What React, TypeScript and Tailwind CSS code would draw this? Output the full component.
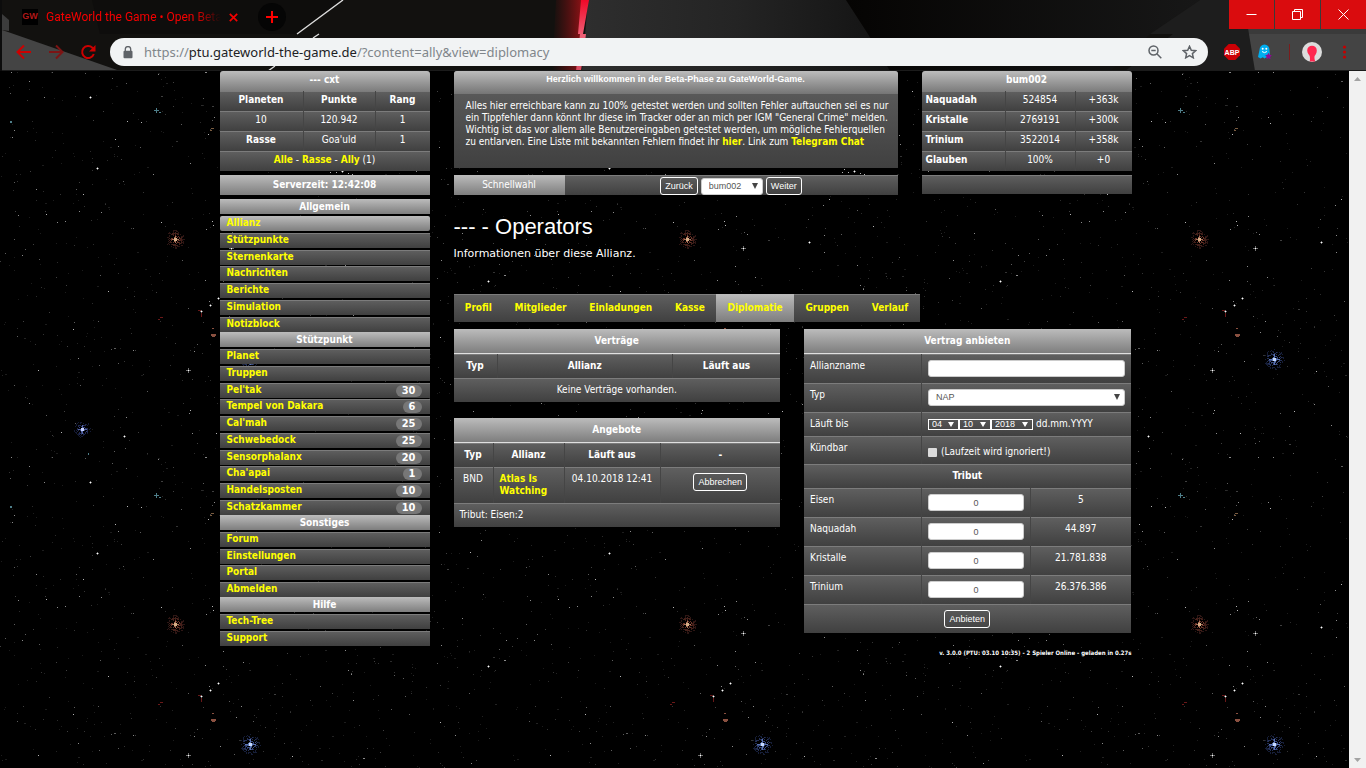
import type { ReactNode } from "react";

const LIGHT = "bg-linear-to-b from-[#bcbcbc] to-[#7e7e7e]";
const DARK = "shadow-[inset_0_1px_0_#7c7c7c] bg-linear-to-b from-[#606060] to-[#404040]";
const LINK = "font-bold text-[#ffff00]";
const UI = "font-['Liberation_Sans',Arial,sans-serif]";
const SEP = "border-l border-l-[#454545]";

/* ---------- star background ---------- */

type Dot = { x: number; y: number; s: number; c: string };

function makeDots(count: number): Dot[] {
  let seed = 4711;
  const next = () => {
    seed = (seed * 1103515245 + 12345) % 2147483648;
    return seed / 2147483648;
  };
  const shades = ["#1c1c1c", "#222222", "#2b2b2b", "#333333", "#3f3f3f", "#5c5c5c", "#8a8a8a"];
  const dots: Dot[] = [];
  for (let i = 0; i < count; i++) {
    const x = Math.floor(next() * 511);
    const y = Math.floor(next() * 384);
    const k = next();
    dots.push({ x, y, s: next() > 0.95 ? 2 : 1, c: shades[Math.floor(k * k * shades.length)] });
  }
  return dots;
}

const DOTS = makeDots(900);

function makeHalo(cx: number, cy: number, radius: number, count: number, shades: string[]): Dot[] {
  let seed = cx * 31 + cy;
  const next = () => {
    seed = (seed * 1103515245 + 12345) % 2147483648;
    return seed / 2147483648;
  };
  const dots: Dot[] = [];
  for (let i = 0; i < count; i++) {
    const a = next() * Math.PI * 2;
    const d = Math.sqrt(next()) * radius;
    dots.push({
      x: Math.round(cx + Math.cos(a) * d),
      y: Math.round(cy + Math.sin(a) * d),
      s: 1,
      c: shades[Math.min(shades.length - 1, Math.floor((d / radius) * shades.length))],
    });
  }
  return dots;
}

const HALOS = [
  ...makeHalo(175, 168, 9, 150, ["#9a5a48", "#6a3428", "#44201a", "#2e1614"]),
  ...makeHalo(82, 358, 8, 110, ["#5a6cae", "#34407a", "#202850", "#141a34"]),
  ...makeHalo(250, 288, 10, 160, ["#5f78b4", "#384a80", "#243058", "#161e38"]),
];

const SPARKS: [number, number, number][] = [
  [97, 97, 2], [83, 123, 1], [161, 151, 1], [218, 227, 2], [210, 234, 2], [201, 240, 2],
  [188, 299, 3], [108, 220, 1], [190, 339, 1], [124, 365, 2], [90, 26, 2], [127, 50, 1],
  [141, 51, 1], [115, 68, 1], [208, 63, 1], [10, 51, 1], [216, 362, 1], [231, 177, 3],
  [297, 171, 2], [212, 150, 1], [213, 154, 1], [317, 128, 1], [361, 155, 1],
  [73, 258, 1], [38, 299, 1], [46, 143, 1], [61, 361, 1], [332, 98, 1], [336, 101, 1],
  [342, 100, 2], [348, 102, 1], [352, 103, 1], [330, 101, 1], [246, 52, 1], [292, 300, 1],
  [372, 318, 2], [440, 266, 1], [470, 96, 1], [488, 210, 2], [270, 340, 1], [400, 20, 1],
];

function Space() {
  return (
    <svg className="absolute inset-0 h-full w-full" aria-hidden="true" shapeRendering="crispEdges">
      <defs>
        <pattern id="stars" width="512" height="385" patternUnits="userSpaceOnUse">
          {DOTS.map((d, i) => (
            <rect key={i} x={d.x} y={d.y} width={d.s} height={1} fill={d.c} />
          ))}
          {HALOS.map((d, i) => (
            <rect key={i} x={d.x} y={d.y} width={1} height={1} fill={d.c} />
          ))}
          {SPARKS.map(([x, y, r], i) => (
            <g key={i}>
              {r > 1 && (
                <path d={`M${x - r + 1} ${y}h${r * 2 - 1}v1h${-(r * 2 - 1)}zM${x} ${y - r + 1}h1v${r * 2 - 1}h-1z`} fill="#707070" />
              )}
              <rect x={x} y={y} width="1" height="1" fill={r > 1 ? "#ffffff" : "#b4b4b4"} />
            </g>
          ))}
          <path d="M172 168h7v1h-7zM175 165h1v7h-1z" fill="#a87058" />
          <path d="M174 167h3v3h-3z" fill="#d8b088" />
          <path d="M78 358h9v1h-9zM82 354h1v9h-1z" fill="#5666a8" />
          <path d="M81 357h3v3h-3z" fill="#c8d4ff" />
          <path d="M245 288h11v1h-11zM250 283h1v11h-1z" fill="#5a74b4" />
          <path d="M249 287h3v3h-3z" fill="#c8dcff" />
          <path d="M198 239h3v1h-3zM201 242h1v4h-1zM158 248h2v1h-2zM160 246h3v1h-3z" fill="#6a1818" />
          <path d="M211 263h5v2h-5zM212 265h3v1h-3zM212 257h2v1h-2z" fill="#8a5040" />
          <path d="M154 39h5v1h-5zM156 37h1v5h-1zM159 41h2v1h-2zM88 382h1v2h-1zM10 50h2v2h-2z" fill="#4f7f8a" />
          <path d="M211 57h3v1h-3zM210 59h2v1h-2z" fill="#7a5c40" />
        </pattern>
      </defs>
      <rect width="100%" height="100%" fill="#000" />
      <rect width="100%" height="100%" fill="url(#stars)" />
    </svg>
  );
}

/* ---------- browser frame ---------- */

function FrameArt() {
  return (
    <svg className="absolute inset-0 h-full w-full" viewBox="0 0 1366 71" preserveAspectRatio="none" aria-hidden="true">
      <defs>
        <linearGradient id="mid" x1="0" x2="1">
          <stop offset="0" stopColor="#2e2e2e" />
          <stop offset="0.5" stopColor="#242424" />
          <stop offset="1" stopColor="#131313" />
        </linearGradient>
        <linearGradient id="glow" x1="0" x2="1">
          <stop offset="0" stopColor="#6a1010" stopOpacity="0" />
          <stop offset="1" stopColor="#8c1216" />
        </linearGradient>
        <linearGradient id="beam" x1="0" y1="0" x2="0" y2="1">
          <stop offset="0" stopColor="#f00828" />
          <stop offset="0.5" stopColor="#ee6076" />
          <stop offset="1" stopColor="#d84a60" />
        </linearGradient>
        <linearGradient id="right" x1="0" x2="1">
          <stop offset="0" stopColor="#050403" />
          <stop offset="1" stopColor="#171717" />
        </linearGradient>
      </defs>
      <rect width="1366" height="71" fill="#12110f" />
      <path d="M92 0H343L297 34H100Z" fill="#0e0d0c" />
      <path d="M2 14L9 20V31L2 30Z" fill="#3c3c3c" />
      <path d="M2 30L8 32L120 71H2Z" fill="#444444" />
      <path d="M343 0L297 34M319 34L313 38M275 66L268 71" stroke="#dcdcdc" strokeWidth="1.4" />
      <path d="M556 0H582L578 71H552Z" fill="url(#glow)" />
      <path d="M588 0H846L868 34L890 71H582Z" fill="url(#mid)" />
      <path d="M581 0H589L583 34H578ZM580 34H586L581 71H576Z" fill="url(#beam)" />
      <path d="M846 0H1200L1150 34L1110 71H890L868 34Z" fill="url(#right)" />
      <path d="M1200 0H1366V71H1125L1173 34H1150Z" fill="#1d1d1d" />
      <path d="M1243 0H1366V34H1249Z" fill="#3a3a3a" />
      <path d="M1249 34H1366V71H1255Z" fill="#444444" />
      <rect y="70" width="1366" height="1" fill="#1b1b1b" />
      <rect width="2" height="71" fill="#0c0c0c" />
    </svg>
  );
}

function WindowButton({ label, children }: { label: string; children: ReactNode }) {
  return (
    <button type="button" aria-label={label} className="flex h-[29px] w-[45px] items-center justify-center bg-[#da0c0e]">
      <svg width="11" height="11" viewBox="0 0 11 11" fill="none" stroke="#fff" strokeWidth="1">
        {children}
      </svg>
    </button>
  );
}

function BrowserFrame() {
  return (
    <header className="relative h-[71px] shrink-0">
      <FrameArt />
      <div className="relative flex h-[34px] items-start">
        <div className="ml-[22px] flex h-[34px] w-[218px] items-center text-[#f40000]">
          <span className={`flex h-4 w-4 items-center justify-center bg-black text-[9px] font-bold text-[#b01818] ${UI}`}>GW</span>
          <span className="ml-2 w-[175px] overflow-hidden mask-r-from-85% font-[Roboto,sans-serif] text-[12px] whitespace-nowrap">
            GateWorld the Game • Open Beta
          </span>
          <button type="button" aria-label="Tab schließen" className="ml-2">
            <svg width="9" height="9" viewBox="0 0 9 9" stroke="#f40000" strokeWidth="1.7"><path d="M.8.8l7.4 7.4M8.2.8L.8 8.2" /></svg>
          </button>
        </div>
        <button type="button" aria-label="Neuer Tab" className="mt-[3px] ml-[18px] flex h-7 w-7 items-center justify-center rounded-full bg-[#050505]">
          <svg width="12" height="12" viewBox="0 0 12 12" stroke="#ff0000" strokeWidth="2"><path d="M6 0v12M0 6h12" /></svg>
        </button>
        <div className="ml-auto flex gap-px">
          <WindowButton label="Minimieren"><path d="M.5 5.5h10" /></WindowButton>
          <WindowButton label="Verkleinern"><path d="M.5 2.5h8v8h-8zM2.5 2.5v-2h8v8h-2" /></WindowButton>
          <WindowButton label="Schließen"><path d="M.5.5l10 10M10.5.5l-10 10" /></WindowButton>
        </div>
      </div>
      <div className="relative flex h-9 items-center pr-[19px] pl-4">
        <button type="button" aria-label="Zurück">
          <svg width="16" height="16" viewBox="0 0 16 16" fill="none" stroke="#cc0000" strokeWidth="2"><path d="M15 8H2.5M8 1.5L1.5 8 8 14.500" /></svg>
        </button>
        <button type="button" aria-label="Vorwärts" className="ml-4">
          <svg width="16" height="16" viewBox="0 0 16 16" fill="none" stroke="#7c1414" strokeWidth="2"><path d="M1 8h12.500M8 1.5L14.500 8 8 14.500" /></svg>
        </button>
        <button type="button" aria-label="Neu laden" className="ml-4">
          <svg width="16" height="16" viewBox="0 0 16 16" fill="none" stroke="#cc0000" strokeWidth="2"><path d="M13.800 10A6 6 0 1 1 12.400 3.800L14 5.500" /><path d="M15.500 1v6.500H9z" fill="#cc0000" stroke="none" /></svg>
        </button>
        <div className="ml-[14px] flex h-7 flex-1 items-center rounded-full bg-[#f1f3f4] pr-[11px] pl-[13px]">
          <svg width="10" height="13" viewBox="0 0 10 13"><path d="M2.300 5V3.300a2.700 2.700 0 0 1 5.400 0V5" fill="none" stroke="#5f6368" strokeWidth="1.300" /><rect x="0.500" y="4.800" width="9" height="7.400" rx="1" fill="#5f6368" /></svg>
          <div className="ml-[11px] flex-1 font-['Noto_Sans',sans-serif] text-[13px] leading-5 text-[#80868b]">
            https://<span className="text-[#202124]">ptu.gateworld-the-game.de</span>/?content=ally&amp;view=diplomacy
          </div>
          <svg width="14" height="14" viewBox="0 0 14 14" fill="none" stroke="#5f6368" strokeWidth="1.500"><circle cx="5.500" cy="5.500" r="4.500" /><path d="M3.300 5.500h4.400M8.800 8.800l4.500 4.500" /></svg>
          <svg className="ml-5" width="15" height="14" viewBox="0 0 15 14" fill="none" stroke="#5f6368" strokeWidth="1.500"><path d="M7.500 1.300l1.800 3.900 4.300.5-3.200 2.900.9 4.200-3.800-2.200-3.800 2.200.9-4.200-3.200-2.900 4.300-.5z" /></svg>
        </div>
        <svg className="ml-4" width="16" height="16" viewBox="0 0 16 16"><path d="M4.700 0h6.600L16 4.700v6.600L11.300 16H4.700L0 11.300V4.700z" fill="#cc0005" /><text x="8" y="10.800" textAnchor="middle" fontSize="7" fontWeight="bold" fill="#fff" fontFamily="Liberation Sans, sans-serif">ABP</text></svg>
        <svg className="ml-[18px]" width="14" height="16" viewBox="0 0 14 16"><path d="M1.500 6a5 5.500 0 0 1 10 0l.5 7-2 1.200-1.700-1-1.800 1.300-1.700-1.300L2.500 14.500 0 13z" fill="#00aef0" /><circle cx="4.700" cy="4.800" r="1" fill="#fff" /><circle cx="8.300" cy="4.800" r="1" fill="#fff" /><path d="M4 7.500q2.500 2.300 5 0" stroke="#fff" fill="none" /><path d="M10.500 8.800l1 2 2.400.4-1.700 1.700.4 2.400-2.100-1.100-2.100 1.100.4-2.400-1.700-1.700 2.400-.4z" fill="#8d0a94" /></svg>
        <div className="ml-[17px] h-4 w-px bg-[#7c1c1c]" />
        <svg className="ml-3" width="20" height="20" viewBox="0 0 20 20"><circle cx="10" cy="10" r="10" fill="#dcdcdc" /><path d="M5.200 8.500a4.800 4.800 0 0 1 9.600 0c0 3-1.600 4.500-2.200 5.500-.3.800-.2 3.500.6 5.400H7.800c.3-1.500.2-3.500 0-5-.3-1.400-2.600-2.700-2.600-5.900z" fill="#ff2850" /></svg>
        <button type="button" aria-label="Menü" className="ml-5">
          <svg width="5" height="14" viewBox="0 0 5 14" fill="#c40000"><circle cx="2.500" cy="2" r="1.600" /><circle cx="2.500" cy="7" r="1.600" /><circle cx="2.500" cy="12" r="1.600" /></svg>
        </button>
      </div>
    </header>
  );
}

function ScrollRail() {
  return (
    <div className="relative flex w-[17px] shrink-0 flex-col items-center justify-between bg-[#f1f1f1] py-[6px]" aria-hidden="true">
      <svg width="7" height="4" viewBox="0 0 7 4" fill="#a3a3a3"><path d="M3.500 0L7 4H0z" /></svg>
      <svg width="7" height="4" viewBox="0 0 7 4" fill="#a3a3a3"><path d="M0 0h7L3.500 4z" /></svg>
    </div>
  );
}

/* ---------- shared controls ---------- */

function OutlineButton({ children }: { children: ReactNode }) {
  return (
    <button type="button" className={`h-[18px] rounded-[3px] border border-white px-1 text-[9px] leading-4 text-white ${UI}`}>
      {children}
    </button>
  );
}

function Picker({ label, options, className, id }: { label?: string; options: string[]; className: string; id?: string }) {
  return (
    <span className={`relative inline-block text-[#555] ${className}`}>
      <select id={id} aria-label={label} className={`block h-[17px] w-full appearance-none rounded-[3px] border border-[#ccc] bg-white pl-[7px] text-[9px] leading-[15px] ${UI}`}>
        {options.map((o) => <option key={o}>{o}</option>)}
      </select>
      <svg className="pointer-events-none absolute top-[5px] right-[5px]" width="6" height="6" viewBox="0 0 6 6" fill="#444"><path d="M0 0h6L3 6z" /></svg>
    </span>
  );
}

function DatePicker({ label, value, className }: { label: string; value: string; className: string }) {
  return (
    <span className={`relative inline-block ${className}`}>
      <select aria-label={label} className={`block h-[11px] w-full appearance-none border border-white bg-transparent pl-[3px] text-[9px] leading-[9px] text-white ${UI}`}>
        <option>{value}</option>
      </select>
      <svg className="pointer-events-none absolute top-[3px] right-[5px]" width="6" height="5" viewBox="0 0 6 5" fill="#fff"><path d="M0 0h6L3 5z" /></svg>
    </span>
  );
}

/* ---------- sidebar ---------- */

type Entry = { name: string; count?: number; active?: boolean };

const MENU: { title: string; height: string; entries: Entry[] }[] = [
  {
    title: "Allgemein",
    height: "h-[116px]",
    entries: [
      { name: "Allianz", active: true }, { name: "Stützpunkte" }, { name: "Sternenkarte" }, { name: "Nachrichten" },
      { name: "Berichte" }, { name: "Simulation" }, { name: "Notizblock" },
    ],
  },
  {
    title: "Stützpunkt",
    height: "h-[166px]",
    entries: [
      { name: "Planet" }, { name: "Truppen" }, { name: "Pel'tak", count: 30 }, { name: "Tempel von Dakara", count: 6 },
      { name: "Cal'mah", count: 25 }, { name: "Schwebedock", count: 25 }, { name: "Sensorphalanx", count: 20 },
      { name: "Cha'apai", count: 1 }, { name: "Handelsposten", count: 10 }, { name: "Schatzkammer", count: 10 },
    ],
  },
  {
    title: "Sonstiges",
    height: "h-[65px]",
    entries: [{ name: "Forum" }, { name: "Einstellungen" }, { name: "Portal" }, { name: "Abmelden" }],
  },
  { title: "Hilfe", height: "h-[32px]", entries: [{ name: "Tech-Tree" }, { name: "Support" }] },
];

const COMPACT = "w-full table-fixed border-separate border-spacing-0 text-center leading-[18px] [&_td]:pb-[2px] [&_th]:pb-[2px]";

function Sidebar() {
  return (
    <aside className="w-[210px] shrink-0">
      <table className={COMPACT}>
        <colgroup><col className="w-[83px]" /><col className="w-[72px]" /><col /></colgroup>
        <thead>
          <tr><th colSpan={3} className={`rounded-t-[3px] ${LIGHT}`}>--- cxt</th></tr>
          <tr><th className={DARK}>Planeten</th><th className={`${DARK} ${SEP}`}>Punkte</th><th className={`${DARK} ${SEP}`}>Rang</th></tr>
        </thead>
        <tbody>
          <tr><td className={DARK}>10</td><td className={`${DARK} ${SEP}`}>120.942</td><td className={`${DARK} ${SEP}`}>1</td></tr>
          <tr><th className={DARK}>Rasse</th><td className={`${DARK} ${SEP}`}>Goa'uld</td><td className={`${DARK} ${SEP}`}>1</td></tr>
          <tr>
            <td colSpan={3} className={DARK}>
              <a href="#alle" className={LINK}>Alle</a> - <a href="#rasse" className={LINK}>Rasse</a> - <a href="#ally" className={LINK}>Ally</a> (1)
            </td>
          </tr>
        </tbody>
      </table>
      <div className={`my-1 text-center leading-5 font-bold ${LIGHT}`}>Serverzeit: 12:42:08</div>
      <nav>
        {MENU.map((g) => (
          <section key={g.title}>
            <h2 className={`mb-[2px] text-center leading-[15px] font-bold ${LIGHT}`}>{g.title}</h2>
            <ul className={`flex flex-col justify-between ${g.height}`}>
              {g.entries.map((e) => (
                <li key={e.name} className={`flex h-[15px] items-start justify-between pr-2 pl-[7px] ${e.active ? `rounded-[2px] ${LIGHT}` : DARK}`}>
                  <a href="#menu" className={`leading-[14px] ${LINK}`}>{e.name}</a>
                  {e.count !== undefined && (
                    <span className="mt-[2px] rounded-full bg-[#777] px-[6px] text-[11px] leading-3 font-bold">{e.count}</span>
                  )}
                </li>
              ))}
            </ul>
          </section>
        ))}
      </nav>
    </aside>
  );
}

/* ---------- main column ---------- */

const RESOURCES = [
  ["Naquadah", "524854", "+363k"],
  ["Kristalle", "2769191", "+300k"],
  ["Trinium", "3522014", "+358k"],
  ["Glauben", "100%", "+0"],
];

const TABS = ["Profil", "Mitglieder", "Einladungen", "Kasse", "Diplomatie", "Gruppen", "Verlauf"];

const TRIBUTE = [
  ["Eisen", "5"],
  ["Naquadah", "44.897"],
  ["Kristalle", "21.781.838"],
  ["Trinium", "26.376.386"],
];

function TopRow() {
  return (
    <div className="flex gap-6">
      <div className="min-w-0 flex-1">
        <div className="h-[97px] rounded-t-[3px] bg-linear-to-b from-[#606060] to-[#404040]">
          <h1 className={`h-[23px] rounded-t-[3px] bg-linear-to-b from-[#bcbcbc] to-[#757575] text-center text-[9px] leading-4 font-bold ${UI}`}>
            Herzlich willkommen in der Beta-Phase zu GateWorld-Game.
          </h1>
          <p className="pt-[6px] pr-1 pl-3 leading-3">
            Alles hier erreichbare kann zu 100% getestet werden und sollten Fehler auftauchen sei es nur
            <br />
            ein Tippfehler dann könnt Ihr diese im Tracker oder an mich per IGM "General Crime" melden.
            <br />
            Wichtig ist das vor allem alle Benutzereingaben getestet werden, um mögliche Fehlerquellen
            <br />
            zu entlarven. Eine Liste mit bekannten Fehlern findet ihr <a href="#bugs" className={LINK}>hier</a>. Link zum{" "}
            <a href="#chat" className={LINK}>Telegram Chat</a>
          </p>
        </div>
        <div className="mt-[7px] flex h-5">
          <label htmlFor="quick" className={`w-[111px] text-center leading-5 ${LIGHT}`}>Schnellwahl</label>
          <div className={`flex flex-1 items-center justify-center gap-[3px] pt-[2px] ${DARK}`}>
            <OutlineButton>Zurück</OutlineButton>
            <Picker id="quick" options={["bum002"]} className="w-[62px]" />
            <OutlineButton>Weiter</OutlineButton>
          </div>
        </div>
      </div>
      <div className="w-[210px] shrink-0">
        <table className={COMPACT}>
          <colgroup><col className="w-[83px]" /><col className="w-[70px]" /><col /></colgroup>
          <thead><tr><th colSpan={3} className={`rounded-t-[3px] ${LIGHT}`}>bum002</th></tr></thead>
          <tbody>
            {RESOURCES.map(([name, amount, rate]) => (
              <tr key={name}>
                <th className={`pl-1 text-left ${DARK}`}>{name}</th>
                <td className={`${DARK} ${SEP}`}>{amount}</td>
                <td className={`${DARK} ${SEP}`}>{rate}</td>
              </tr>
            ))}
          </tbody>
        </table>
        <div className={`mt-1 h-[19px] ${DARK}`} />
      </div>
    </div>
  );
}

function Title({ span, children }: { span: number; children: ReactNode }) {
  return <th colSpan={span} className={`h-[25px] border-b border-[#e0e0e0] ${LIGHT}`}>{children}</th>;
}

function Contracts() {
  return (
    <table className="w-full table-fixed border-separate border-spacing-0 text-center leading-3">
      <colgroup><col className="w-[43px]" /><col /><col className="w-[108px]" /></colgroup>
      <thead>
        <tr><Title span={3}>Verträge</Title></tr>
        <tr><th className={`h-6 ${DARK}`}>Typ</th><th className={`${DARK} ${SEP}`}>Allianz</th><th className={`${DARK} ${SEP}`}>Läuft aus</th></tr>
      </thead>
      <tbody><tr><td colSpan={3} className={`h-6 ${DARK}`}>Keine Verträge vorhanden.</td></tr></tbody>
    </table>
  );
}

function Offers() {
  return (
    <table className="w-full table-fixed border-separate border-spacing-0 text-center leading-3">
      <colgroup><col className="w-[39px]" /><col className="w-[71px]" /><col className="w-[96px]" /><col /></colgroup>
      <thead>
        <tr><Title span={4}>Angebote</Title></tr>
        <tr>
          <th className={`h-6 ${DARK}`}>Typ</th><th className={`${DARK} ${SEP}`}>Allianz</th>
          <th className={`${DARK} ${SEP}`}>Läuft aus</th><th className={`${DARK} ${SEP}`}>-</th>
        </tr>
      </thead>
      <tbody>
        <tr className="align-top">
          <td className={`h-9 pt-[6px] ${DARK}`}>BND</td>
          <td className={`pt-[6px] pl-[6px] text-left ${DARK} ${SEP}`}><a href="#offer" className={LINK}>Atlas Is Watching</a></td>
          <td className={`pt-[6px] ${DARK} ${SEP}`}>04.10.2018 12:41</td>
          <td className={`pt-[6px] ${DARK} ${SEP}`}><OutlineButton>Abbrechen</OutlineButton></td>
        </tr>
        <tr><td colSpan={4} className={`h-6 pl-[6px] text-left ${DARK}`}>Tribut: Eisen:2</td></tr>
      </tbody>
    </table>
  );
}

const FIELD = `block h-[17px] w-full rounded-[3px] border border-[#ccc] bg-white text-[9px] text-[#555] ${UI}`;

function OfferForm() {
  const name = `pt-[6px] pl-[6px] text-left align-top ${DARK}`;
  const cell = `px-[6px] pt-[6px] text-left align-top ${DARK} ${SEP}`;
  return (
    <table className="w-full table-fixed border-separate border-spacing-0 text-center leading-3">
      <colgroup><col className="w-[117px]" /><col className="w-[109px]" /><col /></colgroup>
      <thead><tr><Title span={3}>Vertrag anbieten</Title></tr></thead>
      <tbody>
        <tr>
          <td className={`h-[29px] ${name}`}><label htmlFor="ally">Allianzname</label></td>
          <td colSpan={2} className={cell}><input id="ally" type="text" className={FIELD} /></td>
        </tr>
        <tr>
          <td className={`h-[29px] ${name}`}><label htmlFor="kind">Typ</label></td>
          <td colSpan={2} className={cell}><Picker id="kind" options={["NAP"]} className="w-full align-top" /></td>
        </tr>
        <tr>
          <td className={`h-6 ${name}`}>Läuft bis</td>
          <td colSpan={2} className={cell}>
            <span className="flex items-center">
              <DatePicker label="Tag" value="04" className="w-[31px]" />
              <DatePicker label="Monat" value="10" className="w-8" />
              <DatePicker label="Jahr" value="2018" className="w-[42px]" />
              <span className="ml-[3px]">dd.mm.YYYY</span>
            </span>
          </td>
        </tr>
        <tr>
          <td className={`h-7 ${name}`}><label htmlFor="cancel">Kündbar</label></td>
          <td colSpan={2} className={cell}>
            <span className="flex items-center gap-1 pt-1">
              <input id="cancel" type="checkbox" className="h-[9px] w-[9px] appearance-none rounded-[1px] bg-[#dcdcdc]" />(Laufzeit wird ignoriert!)
            </span>
          </td>
        </tr>
        <tr><th colSpan={3} className={`h-6 ${DARK}`}>Tribut</th></tr>
        {TRIBUTE.map(([res, amount]) => (
          <tr key={res}>
            <td className={`h-[29px] ${name}`}><label htmlFor={`t-${res}`}>{res}</label></td>
            <td className={cell}><input id={`t-${res}`} type="text" defaultValue="0" className={`${FIELD} text-center`} /></td>
            <td className={`pt-[6px] align-top ${DARK} ${SEP}`}>{amount}</td>
          </tr>
        ))}
        <tr><td colSpan={3} className={`h-[29px] ${DARK}`}><OutlineButton>Anbieten</OutlineButton></td></tr>
      </tbody>
    </table>
  );
}

export default function App() {
  return (
    <div className="flex min-h-screen flex-col bg-black font-['DejaVu_Sans_Condensed','DejaVu_Sans',Tahoma,sans-serif] text-[10px] text-white">
      <BrowserFrame />
      <div className="relative flex flex-1">
        <Space />
        <div className="relative flex-1 pl-[2px]">
          <div className="mx-auto flex max-w-[912px] gap-6">
            <Sidebar />
            <main className="min-w-0 flex-1">
              <TopRow />
              <h2 className={`mt-[19px] text-[22px] leading-[26px] ${UI}`}>--- - Operators</h2>
              <p className="mt-[6px] font-['DejaVu_Sans',sans-serif] text-[11px] leading-4">Informationen über diese Allianz.</p>
              <nav className="mt-8 flex max-w-[466px]">
                {TABS.map((t) => (
                  <a key={t} href="#tab" className={`h-7 flex-auto px-[11px] text-center leading-7 ${LINK} ${t === "Diplomatie" ? LIGHT : DARK}`}>{t}</a>
                ))}
              </nav>
              <div className="mt-[7px] grid grid-cols-2 items-start gap-6 pr-px">
                <div className="flex flex-col gap-4">
                  <Contracts />
                  <Offers />
                </div>
                <OfferForm />
              </div>
              <footer className="mt-4 text-right text-[6px] leading-2 font-bold">
                v. 3.0.0 (PTU: 03.10 10:35) - 2 Spieler Online - geladen in 0.27s
              </footer>
            </main>
          </div>
        </div>
        <ScrollRail />
      </div>
    </div>
  );
}
